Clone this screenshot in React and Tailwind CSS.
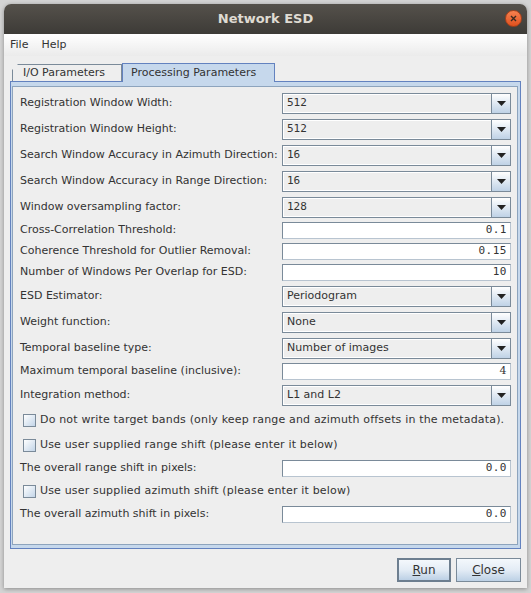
import React from "react";

const rows = [
    { type: "combo", label: "Registration Window Width:", value: "512", mono: true },
    { type: "combo", label: "Registration Window Height:", value: "512", mono: true },
    { type: "combo", label: "Search Window Accuracy in Azimuth Direction:", value: "16", mono: true },
    { type: "combo", label: "Search Window Accuracy in Range Direction:", value: "16", mono: true },
    { type: "combo", label: "Window oversampling factor:", value: "128", mono: true },
    { type: "text", label: "Cross-Correlation Threshold:", value: "0.1" },
    { type: "text", label: "Coherence Threshold for Outlier Removal:", value: "0.15" },
    { type: "text", label: "Number of Windows Per Overlap for ESD:", value: "10" },
    { type: "combo", label: "ESD Estimator:", value: "Periodogram" },
    { type: "combo", label: "Weight function:", value: "None" },
    { type: "combo", label: "Temporal baseline type:", value: "Number of images" },
    { type: "text", label: "Maximum temporal baseline (inclusive):", value: "4", serif: true },
    { type: "combo", label: "Integration method:", value: "L1 and L2" },
    { type: "check", label: "Do not write target bands (only keep range and azimuth offsets in the metadata)." },
    { type: "check", label: "Use user supplied range shift (please enter it below)" },
    { type: "text", label: "The overall range shift in pixels:", value: "0.0" },
    { type: "check", label: "Use user supplied azimuth shift (please enter it below)" },
    { type: "text", label: "The overall azimuth shift in pixels:", value: "0.0" },
];

const sans = "font-['DejaVu_Sans',sans-serif]";
const mono = "font-['DejaVu_Sans_Mono',monospace]";

const Combo = ({ value, isMono }) => (
    <div className="flex h-[21px] border border-[#7a8a99] bg-[#eeeeee]">
        <div
            className={`flex flex-1 items-center border border-white border-r-0 pl-[3px] text-[11px] text-[#333333] ${
                isMono ? mono : sans
            }`}
        >
            {value}
        </div>
        <div className="flex w-[19px] items-center justify-center border-l border-[#7a8a99] bg-gradient-to-b from-[#ffffff] to-[#bfd2e6]">
            <svg width="9" height="5" viewBox="0 0 9 5">
                <path d="M0 0 H9 L4.5 5 Z" fill="#222" />
            </svg>
        </div>
    </div>
);

const TextField = ({ value, serif }) => (
    <div className="flex h-[17px] items-center justify-end border border-[#7a8a99] border-b-[#b8c4d0] border-r-[#b8c4d0] bg-white pr-[3px]">
        <span
            className={`text-[11px] tracking-[0.5px] text-[#333333] ${
                serif ? "font-['DejaVu_Serif',serif]" : mono
            }`}
        >
            {value}
        </span>
    </div>
);

const CheckBox = () => (
    <div className="h-[13px] w-[13px] shrink-0 border border-[#7a8a99] bg-gradient-to-br from-[#ffffff] to-[#c3d5e8]" />
);

const Row = ({ row }) => {
    if (row.type === "check") {
        return (
            <div className="flex h-[25px] items-center pl-[3px]">
                <CheckBox />
                <span className="ml-[4px] text-[11px] tracking-[0.17px] text-[#333333]">{row.label}</span>
            </div>
        );
    }
    return (
        <div className={`flex items-center ${row.type === "combo" ? "h-[26px]" : "h-[21px]"}`}>
            <span className="w-[262px] shrink-0 text-[11px] text-[#333333]">{row.label}</span>
            <div className="flex-1 pr-[6px]">
                {row.type === "combo" ? (
                    <Combo value={row.value} isMono={row.mono} />
                ) : (
                    <TextField value={row.value} serif={row.serif} />
                )}
            </div>
        </div>
    );
};

const Button = ({ children, isDefault, width }) => (
    <div
        className={`flex h-[24px] items-center justify-center bg-gradient-to-b from-[#f4f8fc] via-[#e3ecf5] to-[#bcd0e5] text-[12px] text-[#333333] ${
            isDefault ? "border-2 border-[#6d7e8f]" : "border border-[#7a8a99]"
        } ${width}`}
    >
        {children}
    </div>
);

export default function App() {
    return (
        <div className={`h-[593px] w-[531px] bg-[#d4d4d4] pl-[4px] pr-[4px] pt-[4px] ${sans}`}>
            <div className="flex h-[584px] flex-col overflow-hidden rounded-t-[7px] bg-[#eeeeee] shadow-[0_1px_4px_rgba(0,0,0,0.35)]">
                {/* title bar */}
                <div className="relative flex h-[30px] shrink-0 items-center justify-center bg-gradient-to-b from-[#55514b] to-[#3d3b37]">
                    <span className="text-[13px] font-bold text-[#dfdbd2]">Network ESD</span>
                    <div className="absolute right-[5px] top-[6px] flex h-[17px] w-[17px] items-center justify-center rounded-full border border-[#a8401a] bg-gradient-to-b from-[#f5814f] to-[#e0501c]">
                        <svg width="7" height="7" viewBox="0 0 7 7">
                            <path d="M1 1 L6 6 M6 1 L1 6" stroke="#3a2a20" strokeWidth="1.4" />
                        </svg>
                    </div>
                </div>

                {/* menu bar */}
                <div className="flex h-[22px] shrink-0 items-center gap-[13px] bg-gradient-to-b from-[#ffffff] to-[#ebebeb] pl-[6px] text-[11px] text-[#333333]">
                    <span>File</span>
                    <span>Help</span>
                </div>

                {/* body */}
                <div className="flex flex-1 flex-col px-[6px] pt-[6px]">
                    {/* tabs */}
                    <div className="flex h-[19px] shrink-0 items-end pl-[2px]">
                        <div className="relative flex h-[17px] w-[110px] items-center border border-b-0 border-[#7a8a99] bg-[#eeeeee] pl-[10px] text-[11px] text-[#333333] [clip-path:polygon(6px_0,100%_0,100%_100%,0_100%,0_6px)]">
                            I/O Parameters
                        </div>
                        <div className="relative z-10 -mb-[1px] flex h-[19px] w-[153px] items-center border border-b-0 border-[#6382bf] bg-[#c6d8ec] pl-[8px] text-[11px] text-[#333333]">
                            Processing Parameters
                        </div>
                    </div>

                    {/* tab content */}
                    <div className="flex flex-1 flex-col border border-[#6382bf] bg-[#c6d8ec] pb-[3px] pl-[1px] pr-[2px] pt-[4px]">
                        <div className="flex flex-1 flex-col border border-[#8da4bd] bg-[#eeeeee] pl-[7px] pt-[3px]">
                            {rows.map((row, index) => (
                                <Row key={index} row={row} />
                            ))}
                        </div>
                    </div>

                    {/* buttons */}
                    <div className="mb-[6px] mt-[9px] flex shrink-0 justify-end gap-[5px]">
                        <Button isDefault width="w-[54px]">
                            <span>
                                <span className="underline">R</span>un
                            </span>
                        </Button>
                        <Button width="w-[65px]">
                            <span>
                                <span className="underline">C</span>lose
                            </span>
                        </Button>
                    </div>
                </div>
            </div>
        </div>
    );
}
